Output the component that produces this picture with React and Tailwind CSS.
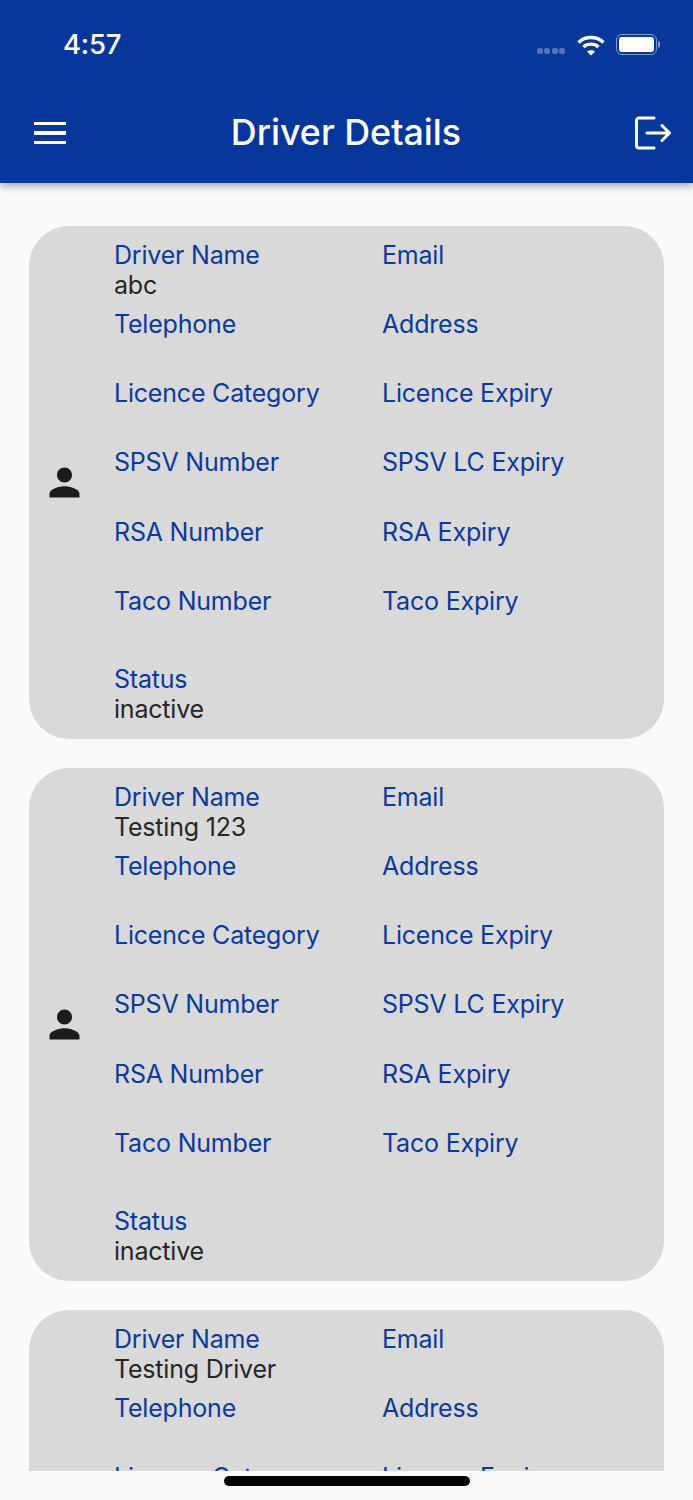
const rows = [
  ['Telephone', 'Address'],
  ['Licence Category', 'Licence Expiry'],
  ['SPSV Number', 'SPSV LC Expiry'],
  ['RSA Number', 'RSA Expiry'],
  ['Taco Number', 'Taco Expiry'],
]

const drivers = [
  { name: 'abc', status: 'inactive' },
  { name: 'Testing 123', status: 'inactive' },
  { name: 'Testing Driver', status: 'inactive' },
]

function Field({ label, value }) {
  return (
    <div className="w-[268px] shrink-0">
      <p className="h-[30px] leading-[30px] text-[#0a3a9c]">{label}</p>
      <p className="h-[30px] leading-[30px] text-[#262626]">{value}</p>
    </div>
  )
}

function DriverCard({ driver }) {
  return (
    <article className="flex shrink-0 h-[513px] items-center rounded-[40px] bg-[#d9d9d9] pl-[12.5px]">
      <svg viewBox="0 0 24 24" className="w-[45px] h-[45px] shrink-0 fill-[#1c1c1c]">
        <path d="M12 12c2.21 0 4-1.79 4-4s-1.79-4-4-4-4 1.79-4 4 1.79 4 4 4zm0 2c-2.67 0-8 1.34-8 4v2h16v-2c0-2.66-5.33-4-8-4z" />
      </svg>
      <div className="ml-[27.5px] flex flex-col self-start pt-[13.7px]">
        <div className="flex flex-col gap-[9.25px]">
          <div className="flex">
            <Field label="Driver Name" value={driver.name} />
            <Field label="Email" />
          </div>
          {rows.map(([left, right]) => (
            <div key={left} className="flex">
              <Field label={left} />
              <Field label={right} />
            </div>
          ))}
        </div>
        <div className="mt-[18px] flex">
          <Field label="Status" value={driver.status} />
        </div>
      </div>
    </article>
  )
}

function Wifi() {
  return (
    <svg viewBox="0 0 30 24" className="w-[30px] h-[24px] fill-none stroke-white stroke-[3.4]">
      <path d="M2.5 9.5c7-6.6 18-6.6 25 0" />
      <path d="M7.5 14c4.2-3.8 10.8-3.8 15 0" />
      <path d="M15 22.5l-4-4c2.2-1.8 5.8-1.8 8 0z" className="fill-white stroke-none" />
    </svg>
  )
}

function Battery() {
  return (
    <div className="flex items-center">
      <div className="w-[41px] h-[21px] rounded-[6px] border-[1.5px] border-[#8298cb] p-[2px]">
        <div className="w-full h-full rounded-[3px] bg-white" />
      </div>
      <div className="ml-[1px] w-[2px] h-[7px] rounded-r-full bg-[#8298cb]" />
    </div>
  )
}

export default function App() {
  return (
    <div className="w-[693px] h-[1500px] overflow-hidden bg-[#fafafa] text-[25px] tracking-[-0.2px] font-['Inter',sans-serif]">
      <header className="relative z-10 h-[183px] bg-[#07379b] shadow-[0_3px_8px_rgba(0,0,0,0.35)] text-white">
        <div className="flex h-[88px] items-center pl-[63px] pr-[33px] pt-[1px]">
          <span className="text-[27.5px] font-medium">4:57</span>
          <div className="ml-auto flex items-center">
            <div className="flex gap-[1.5px] mt-[13px] mr-[11px]">
              <span className="w-[6px] h-[6px] rounded-[2px] bg-[#5573b8]" />
              <span className="w-[6px] h-[6px] rounded-[2px] bg-[#5573b8]" />
              <span className="w-[6px] h-[6px] rounded-[2px] bg-[#5573b8]" />
              <span className="w-[6px] h-[6px] rounded-[2px] bg-[#5573b8]" />
            </div>
            <Wifi />
            <div className="ml-[10px]">
              <Battery />
            </div>
          </div>
        </div>
        <div className="grid h-[90px] grid-cols-[1fr_auto_1fr] items-center pl-[34px] pr-[22px]">
          <div className="flex w-[32px] flex-col gap-[6px]">
            <span className="h-[3.5px] bg-white" />
            <span className="h-[3.5px] bg-white" />
            <span className="h-[3.5px] bg-white" />
          </div>
          <h1 className="-ml-[13px] text-[35.8px] tracking-normal font-medium">Driver Details</h1>
          <svg viewBox="0 0 36 34" className="justify-self-end w-[36px] h-[34px] fill-none stroke-white stroke-[3]" strokeLinecap="round" strokeLinejoin="round">
            <path d="M19 2H4a2.5 2.5 0 0 0-2.5 2.5v25A2.5 2.5 0 0 0 4 32h15" />
            <path d="M12 17h22M27 9.5l7.5 7.5-7.5 7.5" />
          </svg>
        </div>
      </header>
      <main className="flex h-[1288px] flex-col gap-[29px] overflow-hidden px-[29px] pt-[43px]">
        {drivers.map((driver) => (
          <DriverCard key={driver.name} driver={driver} />
        ))}
      </main>
      <div className="flex justify-center pt-[5px]">
        <div className="w-[246px] h-[10px] rounded-full bg-black" />
      </div>
    </div>
  )
}
